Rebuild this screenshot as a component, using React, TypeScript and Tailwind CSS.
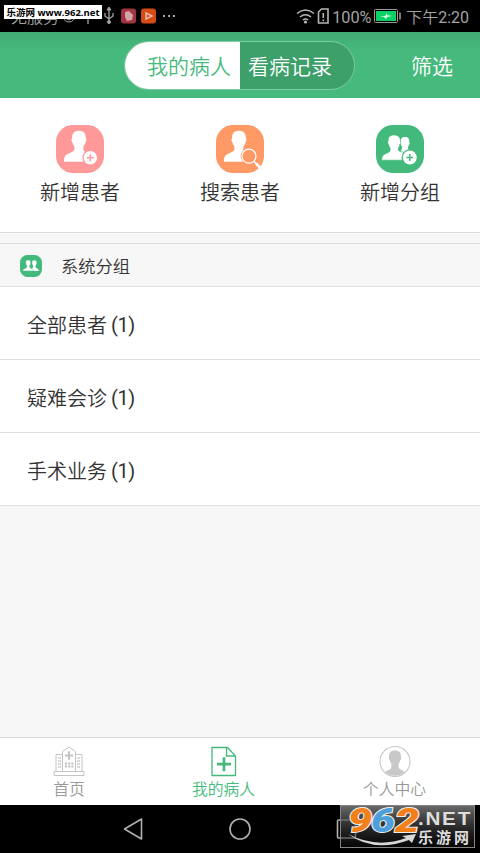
import type { ReactNode } from "react";

const PERSON =
  "M23 5.800c-5 0-7.100 3-6.900 7.400-1 .4-.8 2.500.3 4 .4 2.300 1.300 3.200 2 4.300v3.300c-.7 1.900-3.900 2.900-6.600 4.300C8.500 30.800 8 32.500 8 36.800h19l2.500-9.500c-1.300-.8-2-1.500-2.100-2.500v-3.300c.8-1.100 1.700-2 2.100-4.300 1.100-1.500 1.300-3.600.3-4C30 8.800 28 5.800 23 5.800Z";

const AddPatientIcon = () => (
  <svg viewBox="0 0 48 48" className="size-12">
    <rect width="48" height="48" rx="17" fill="#ff9899" />
    <path d={PERSON} fill="#fff" />
    <circle cx="34.300" cy="32.800" r="8" fill="#ff9899" />
    <circle cx="34.300" cy="32.800" r="6.800" fill="#fff" />
    <path d="M30.800 32.800h7M34.300 29.300v7" stroke="#ff9899" strokeWidth="1.500" />
  </svg>
);

const SearchPatientIcon = () => (
  <svg viewBox="0 0 48 48" className="size-12">
    <rect width="48" height="48" rx="17" fill="#ff9966" />
    <path d={PERSON} fill="#fff" />
    <circle cx="33" cy="31.200" r="8.300" fill="#ff9966" />
    <circle cx="33" cy="31.200" r="7" fill="none" stroke="#fff" strokeWidth="1.300" />
    <path d="M38 36.400l2.300 2.300" stroke="#fff" strokeWidth="1.500" />
    <path d="M40 38.400l4 4.200" stroke="#fff" strokeWidth="2.800" />
  </svg>
);

const AddGroupIcon = () => (
  <svg viewBox="0 0 48 48" className="size-12">
    <rect width="48" height="48" rx="17" fill="#44b97c" />
    <path
      d="M29 12c3.200 0 4.500 1.900 4.300 4.900.6.600.3 2-.3 2.800-.3 1.300-1 1.900-1.100 3.300l1.600 4H24.500l1.700-4c-.2-1.400-.8-2-1.100-3.300-.6-.8-.9-2.200-.3-2.800-.2-3 1-4.900 4.200-4.900Z"
      fill="#fff"
    />
    <path
      d="M18 10c-4.300 0-6.100 2.400-5.800 6-.8.600-.6 2.300.4 3.500.3 1.900 1 2.600 1.500 3.500v2.700c-.5 1.600-3.600 2.400-5.500 3.500C6.300 30.600 5.700 32 5.700 35.200h21l1-8c-3.300-.7-5-1-5.300-2.300V23c.5-.9 1.200-1.600 1.500-3.500 1-1.200 1.200-2.900.4-3.500.3-3.600-2-6-6.300-6Z"
      fill="#fff"
      stroke="#44b97c"
      strokeWidth=".7"
    />
    <circle cx="33.800" cy="32.500" r="8.200" fill="#44b97c" />
    <circle cx="33.800" cy="32.500" r="6.900" fill="#fff" />
    <path d="M30.300 32.500h7M33.800 29v7" stroke="#44b97c" strokeWidth="1.500" />
  </svg>
);

const GroupIcon = () => (
  <svg viewBox="0 0 22 22" className="size-[22px]">
    <rect width="22" height="22" rx="7.500" fill="#44b97c" />
    <path
      d="M14.300 5.300c1.800 0 2.400 1.200 2.200 2.900 0 1.500-.8 2-1 2.800v1c.5 1.300 3.400 1.500 3.400 3.900H10l3.200-4v-.9c-.2-.8-1-1.300-1-2.800-.2-1.700.3-2.900 2.100-2.900Z"
      fill="#fff"
    />
    <path
      d="M8.200 5c2 0 2.700 1.300 2.500 3.100 0 1.500-.8 2.100-1 2.900v1.200c.5 1.300 4.100 1.400 4.100 3.700H2.800c0-2.300 3.500-2.400 4-3.700V11c-.2-.8-1-1.400-1-2.900C5.500 6.300 6.200 5 8.200 5Z"
      fill="#fff"
      stroke="#44b97c"
      strokeWidth=".4"
    />
  </svg>
);

const HospitalIcon = () => (
  <svg viewBox="0 0 32 32" className="size-8" fill="none" stroke="#c4c4c4">
    <path d="M1 26.500h30v4H1zM3 26.500v-17h6.500M22.500 9.500H29v17M9.500 26.500v-20L16 2.200l6.500 4.300v20" />
    <path d="M11.800 10.500h8.400M16 6.300v8.400" strokeWidth="2.200" />
    <path d="M5 13h3m-3 3h3m-3 3h3m-3 3h3M24 13h3m-3 3h3m-3 3h3m-3 3h3" strokeWidth="1.500" strokeDasharray="1.300 .4" />
    <path d="M12 18.500h8.500M12 21.500h8.500" strokeWidth="2" strokeDasharray="2.200 1" />
  </svg>
);

const RecordIcon = () => (
  <svg viewBox="0 0 32 32" className="size-8" fill="none" stroke="#44b97c">
    <path d="M4 2.500h15.500l8 8.500v19.500H4zM18.500 2.500V11h9" strokeWidth="1.300" />
    <path d="M9 19.200h14M16 12.200v14" strokeWidth="2.700" />
  </svg>
);

const ProfileIcon = () => (
  <svg viewBox="0 0 32 32" className="size-8">
    <circle cx="16" cy="16.500" r="15" fill="#fff" stroke="#c6c6c6" strokeWidth="1.100" />
    <path
      d="M16 5.500c-4.300 0-6.300 2.600-5.900 6.200-.8.800-.4 2.500.6 3.600.3 1.700 1 2.500 1.700 3.400v3.800c-.4 2.200-4.300 2.600-6.300 4.600A14.200 14.200 0 0 0 16 30.700a14.200 14.200 0 0 0 9.900-3.600c-2-2-5.900-2.400-6.300-4.600v-3.800c.7-.9 1.400-1.700 1.700-3.400 1-1.100 1.400-2.800.6-3.600C22.300 8.100 20.300 5.500 16 5.500Z"
      fill="#c8c8c8"
    />
  </svg>
);

const StatusBar = () => (
  <div className="relative flex h-8 shrink-0 items-center bg-black font-['Roboto','Noto_Sans_CJK_SC',sans-serif] text-[16px] text-[#a3a3a3]">
    <span className="ml-[11px] w-[53px] whitespace-nowrap pt-[3px] font-[350] leading-8">无服务</span>
    <svg viewBox="0 0 118 24" className="h-6 w-[118px]" fill="none" stroke="#a3a3a3">
      <circle cx="5" cy="12" r="6" />
      <path d="M2 14q3 3 6 0M24 7v13" strokeWidth="1.300" />
      <path d="M45 5v13M41 9v3l4 3 4-3V9" strokeWidth="1.300" />
      <path d="M43 6l2-3 2 3z" fill="#a3a3a3" />
      <circle cx="45" cy="18" r="1.500" fill="#a3a3a3" />
      <rect x="57" y="4.500" width="15" height="15" rx="3" fill="#a33543" stroke="none" />
      <path d="M61 8l4-1 4 4-1 5-5 1-2-4z" fill="#d3a5a8" stroke="none" />
      <rect x="77" y="4.500" width="15" height="15" rx="3" fill="#d54b15" stroke="none" />
      <path d="M82 9l6 3-6 3z" stroke="#e8c0aa" strokeWidth="1.400" />
      <path d="M99 12h2m3 0h2m3 0h2" strokeWidth="2" />
    </svg>
    <div className="ml-auto flex items-center">
      <svg viewBox="0 0 36 20" className="h-5 w-9" fill="none" stroke="#b5b5b5" strokeWidth="1.600">
        <path d="M1 7.500q8.500-7 17 0M4 11q5.500-4.500 11 0M7 14q2.500-2 5 0" />
        <circle cx="9.500" cy="16" r=".8" fill="#b5b5b5" />
        <path d="M25.500 3H32v14H22.500V6z" />
        <path d="M27.300 7v5M27.300 13.500v1.700" />
      </svg>
      <span className="w-[42px] pt-[3px] text-[16.300px] leading-8">100%</span>
      <svg viewBox="0 0 27 14" className="h-3.5 w-[27px]">
        <rect x=".5" y=".5" width="23" height="13" rx="1" fill="none" stroke="#9a9a9a" />
        <rect x="2" y="2" width="20" height="10" fill="#0bd164" />
        <path d="M6 7h5l2-3v2l5 1-5 1-1 2-2-2z" fill="#d7ffe6" />
        <path d="M26 3.500v7" stroke="#a3a3a3" strokeWidth="1.500" />
      </svg>
      <span className="ml-[5px] mr-[11px] pt-[3px] text-[16px] leading-8">
        <span className="font-[350]">下午</span>2:20
      </span>
    </div>
    <div className="absolute left-1 top-[5px] flex h-3.5 w-[98px] items-center justify-center whitespace-nowrap bg-white pt-0.5 font-['Open_Sans','Noto_Sans_CJK_SC',sans-serif] text-[9.500px] font-bold leading-none text-black">
      乐游网 www.962.net
    </div>
  </div>
);

const Header = () => (
  <header className="flex h-[66px] shrink-0 items-center bg-gradient-to-b from-[#42ac74] to-[#46ba7d] to-30% text-[21px] font-[350]">
    <div className="ml-[124px] flex h-[49px] w-[231px] overflow-hidden rounded-full border border-[#7fcba3] bg-[#3d9f69]">
      <button className="w-[115px] bg-white pl-[13px] pt-[5px] text-[#46ba7d]">我的病人</button>
      <button className="pl-[8px] pt-[5px] text-white">看病记录</button>
    </div>
    <button className="ml-auto mr-[27px] pt-[5px] text-white">筛选</button>
  </header>
);

const Action = ({ icon, label }: { icon: ReactNode; label: string }) => (
  <button className="flex flex-1 flex-col items-center pt-[27px] text-[20px] font-[350] leading-[40px] text-[#333]">
    {icon}
    {label}
  </button>
);

const Tab = ({ icon, label, className }: { icon: ReactNode; label: string; className: string }) => (
  <button className={`flex flex-col items-center pt-[7px] text-[15.800px] font-[350] leading-[26px] ${className}`}>
    {icon}
    {label}
  </button>
);

const groups = [
  { name: "全部患者", count: 1 },
  { name: "疑难会诊", count: 1 },
  { name: "手术业务", count: 1 },
];

const Watermark = () => (
  <svg viewBox="0 0 136 44" className="absolute right-1 top-0 h-11 w-[136px] overflow-visible">
    <defs>
      <linearGradient id="plate" x1="0" y1="0" x2="0" y2="1">
        <stop offset="0" stopColor="#777" stopOpacity=".9" />
        <stop offset="1" stopColor="#111" stopOpacity=".4" />
      </linearGradient>
    </defs>
    <rect x=".5" y=".5" width="134" height="42" fill="url(#plate)" stroke="#858585" />
    <path d="M8 29q29 15 58 4l-4-2 14-2-4 9-3-3q-35 13-61-6Z" fill="#d8d8d8" />
    <g
      fontFamily="Roboto"
      fontSize="34"
      fontWeight="900"
      fontStyle="italic"
      stroke="#eee"
      strokeWidth="2"
      paintOrder="stroke"
    >
      <text x="8" y="26.500" textLength="24" lengthAdjust="spacingAndGlyphs" fill="#f27f18">9</text>
      <text x="31" y="26.500" textLength="24" lengthAdjust="spacingAndGlyphs" fill="#4c9fda">6</text>
      <text x="55" y="26.500" textLength="24" lengthAdjust="spacingAndGlyphs" fill="#f27f18">2</text>
    </g>
    <text x="78" y="19.500" textLength="54" lengthAdjust="spacingAndGlyphs" fill="#ddd" fontFamily="Liberation Sans" fontSize="18" fontWeight="bold" letterSpacing="1.500">.NET</text>
    <text x="78" y="37.500" textLength="51" fill="#ddd" fontFamily="Noto Sans CJK SC" fontSize="15" fontWeight="bold">乐游网</text>
  </svg>
);

const App = () => {
  return (
    <div className="flex h-[853px] w-[480px] flex-col overflow-hidden bg-[#f7f7f7] font-['Roboto','Noto_Sans_CJK_SC',sans-serif]">
      <StatusBar />
      <Header />

      {/* Quick actions */}
      <section className="flex h-[135px] shrink-0 border-b border-[#dcdcdc] bg-white">
        <Action icon={<AddPatientIcon />} label="新增患者" />
        <Action icon={<SearchPatientIcon />} label="搜索患者" />
        <Action icon={<AddGroupIcon />} label="新增分组" />
      </section>

      {/* Patient groups */}
      <section className="mt-2.5 border-t border-[#dcdcdc]">
        <div className="flex h-[42px] items-center gap-[19px] pl-5 pt-[2px] text-[17.300px] font-[350] text-[#333]">
          <GroupIcon />
          <span className="pt-1">系统分组</span>
        </div>
        {groups.map((group) => (
          <div
            key={group.name}
            className="flex h-[73px] items-center border-t border-[#e0e0e0] bg-white pl-[27px] pt-[6px] text-[20px] text-[#333] last:h-[74px] last:border-b"
          >
            <span className="font-[350]">{group.name}</span>
            <span className="-mt-0.5 ml-1 tracking-[-0.4px]">({group.count})</span>
          </div>
        ))}
      </section>

      {/* Bottom tabs */}
      <nav className="mt-auto flex h-[68px] shrink-0 border-t border-[#d8d8d8] bg-white">
        <Tab icon={<HospitalIcon />} label="首页" className="w-[138px] text-[#999]" />
        <Tab icon={<RecordIcon />} label="我的病人" className="w-[171px] text-[#46ba7d]" />
        <Tab icon={<ProfileIcon />} label="个人中心" className="w-[171px] text-[#999]" />
      </nav>

      <div className="relative h-12 shrink-0 bg-black">
        <svg viewBox="0 0 480 48" className="h-12 w-[480px]" fill="none" stroke="#b0b0b0" strokeWidth="1.600">
          <path d="M124.500 24l17-10v20z" strokeLinejoin="round" />
          <circle cx="240" cy="24" r="10" />
          <rect x="337.500" y="15" width="18" height="18" rx="1" />
        </svg>
        <Watermark />
      </div>
    </div>
  );
};

export default App;
